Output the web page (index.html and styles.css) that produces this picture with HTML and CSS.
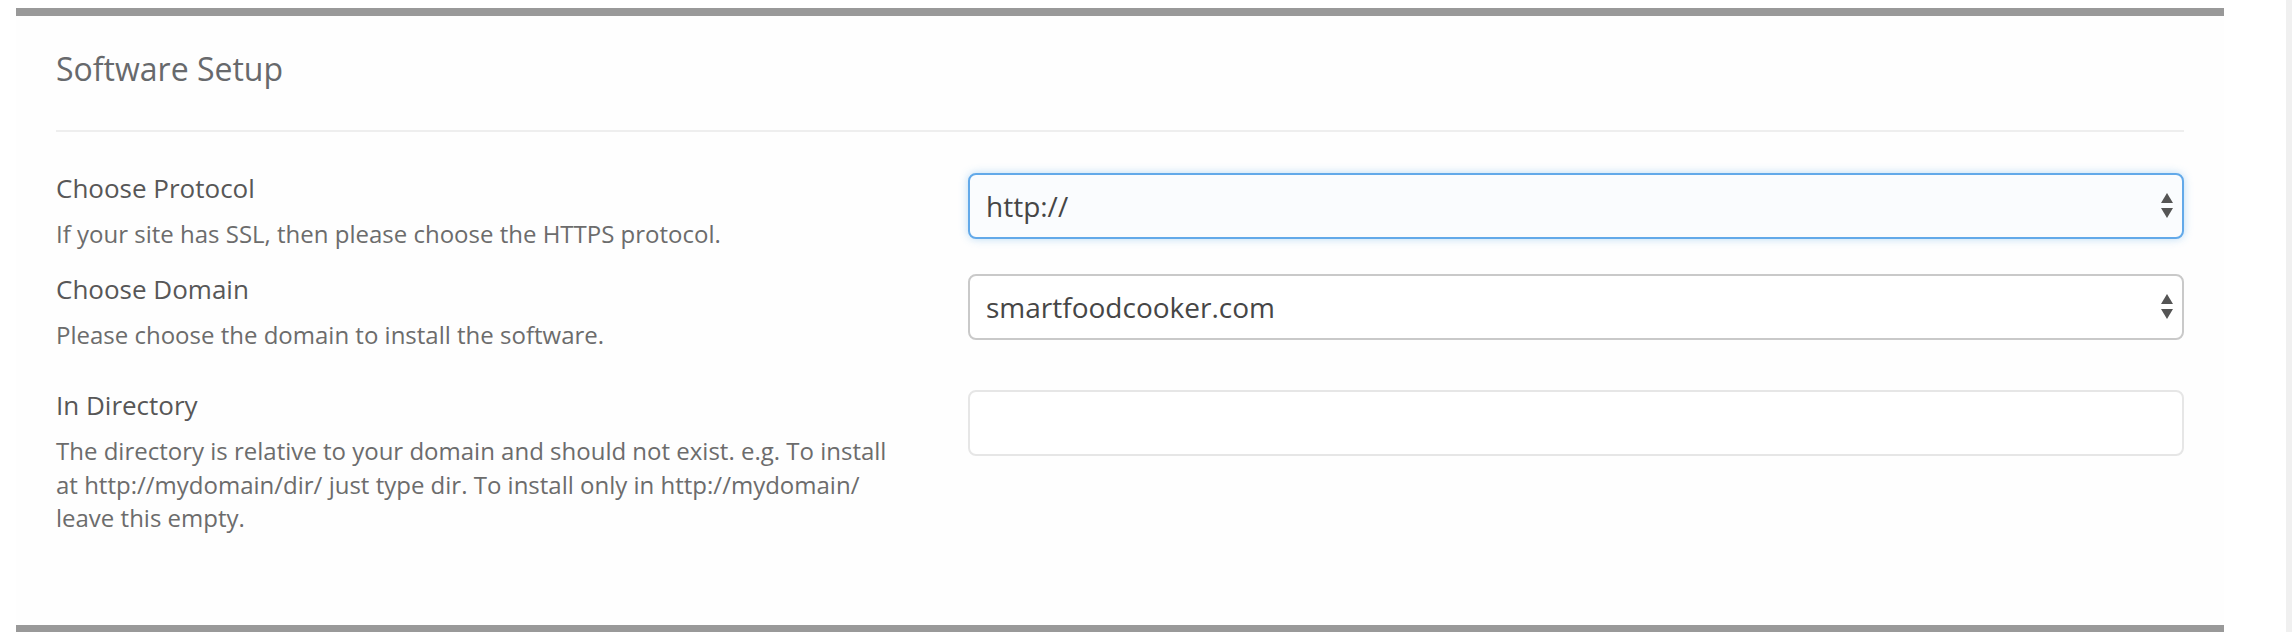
FILE: index.html
```html
<!DOCTYPE html>
<html lang="en">
<head>
<meta charset="utf-8">
<title>Software Setup</title>
<link rel="stylesheet" href="styles.css">
</head>
<body>
<div class="page">
  <section class="panel">
    <div class="panel-head">
      <h2 class="panel-title">Software Setup</h2>
    </div>
    <div class="panel-body">
      <div class="field">
        <div class="field-text">
          <label class="field-label" for="protocol">Choose Protocol</label>
          <p class="field-desc">If your site has SSL, then please choose the HTTPS protocol.</p>
        </div>
        <div class="field-control">
          <div class="select-wrap">
            <select id="protocol" class="control control-focus">
              <option>http://</option>
              <option>http://www.</option>
              <option>https://</option>
              <option>https://www.</option>
            </select>
            <svg class="select-arrows" width="12" height="26" viewBox="0 0 12 26" aria-hidden="true">
              <path d="M6 0 L12 10 L0 10 Z" fill="#555"/>
              <path d="M0 15 L12 15 L6 25 Z" fill="#555"/>
            </svg>
          </div>
        </div>
      </div>
      <div class="field">
        <div class="field-text">
          <label class="field-label" for="domain">Choose Domain</label>
          <p class="field-desc">Please choose the domain to install the software.</p>
        </div>
        <div class="field-control">
          <div class="select-wrap">
            <select id="domain" class="control">
              <option>smartfoodcooker.com</option>
            </select>
            <svg class="select-arrows" width="12" height="26" viewBox="0 0 12 26" aria-hidden="true">
              <path d="M6 0 L12 10 L0 10 Z" fill="#555"/>
              <path d="M0 15 L12 15 L6 25 Z" fill="#555"/>
            </svg>
          </div>
        </div>
      </div>
      <div class="field field-spaced">
        <div class="field-text">
          <label class="field-label" for="directory">In Directory</label>
          <p class="field-desc">The directory is relative to your domain and should not exist. e.g. To install at http://mydomain/dir/ just type dir. To install only in http://mydomain/ leave this empty.</p>
        </div>
        <div class="field-control">
          <input id="directory" class="control control-input" type="text" value="">
        </div>
      </div>
    </div>
  </section>
  <div class="scroll-track"></div>
</div>
</body>
</html>
```

FILE: styles.css
```css
* {
  box-sizing: border-box;
}

html, body {
  margin: 0;
  padding: 0;
  background: #ffffff;
}

body {
  font-family: "Open Sans", "Liberation Sans", sans-serif;
  color: #555;
}

.page {
  display: flex;
  align-items: flex-start;
  height: 632px;
  overflow: hidden;
  padding-top: 8px;
}

.panel {
  margin-left: 16px;
  width: 2208px;
  flex: none;
  background: #fefefe;
  border-top: 8px solid #999999;
  border-bottom: 8px solid #999999;
  padding: 0 40px;
}

.panel-head {
  padding: 31px 0 39px;
  border-bottom: 2px solid #eeeeee;
}

.panel-title {
  margin: 0;
  font-size: 32px;
  line-height: 44px;
  font-weight: 400;
  color: #67696c;
}

.panel-body {
  padding: 38px 0 90px;
}

.field {
  display: grid;
  grid-template-columns: 852px 1216px;
  column-gap: 60px;
  align-items: start;
}

.field + .field {
  margin-top: 20px;
}

.field + .field-spaced {
  margin-top: 36px;
}

.field-label {
  display: block;
  font-size: 26px;
  line-height: 37px;
  font-weight: 400;
  color: #575757;
}

.field-desc {
  margin: 10px 0 0;
  font-size: 24px;
  line-height: 33.5px;
  color: #6c6c6c;
}

.field-control {
  padding-top: 3px;
}

.select-wrap {
  position: relative;
}

.control {
  display: block;
  width: 100%;
  height: 66px;
  margin: 0;
  padding: 0 16px;
  font-family: "Open Sans", "Liberation Sans", sans-serif;
  font-size: 28px;
  color: #464646;
  background: #ffffff;
  border: 2px solid #c9c9c9;
  border-radius: 8px;
  -webkit-appearance: none;
  appearance: none;
  outline: none;
}

.control-focus {
  background: #fafcfe;
  border-color: #62a9e9;
  box-shadow: 0 0 9px rgba(102, 175, 233, 0.45);
}

.control-input {
  border-color: #e6e6e6;
}

.select-arrows {
  position: absolute;
  right: 11px;
  top: 50%;
  margin-top: -13px;
  pointer-events: none;
}

.scroll-track {
  margin-left: auto;
  width: 6px;
  height: 632px;
  margin-top: -8px;
  background: #f0f0f0;
  flex: none;
}
```
